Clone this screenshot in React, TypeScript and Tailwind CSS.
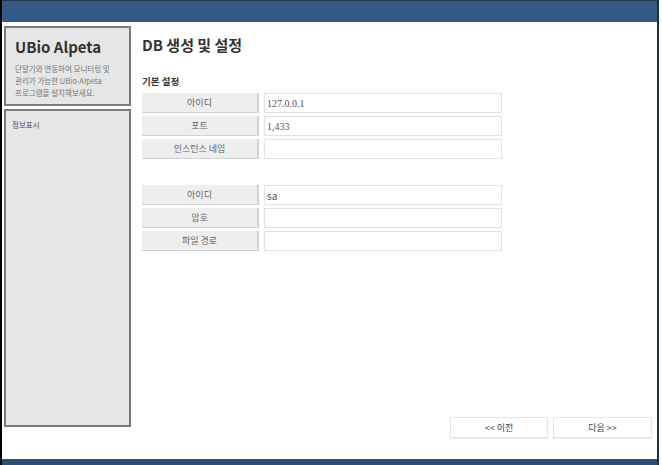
const fontStack = '"Noto Sans CJK KR", "Noto Sans", sans-serif';

interface Field {
  label: string;
  value: string;
  serif?: boolean;
}

const basicFields: Field[] = [
  { label: '아이디', value: '127.0.0.1', serif: true },
  { label: '포트', value: '1,433', serif: true },
  { label: '인스턴스 네임', value: '' },
];

const accountFields: Field[] = [
  { label: '아이디', value: 'sa' },
  { label: '암호', value: '' },
  { label: '파일 경로', value: '' },
];

function FieldRow({ field }: { field: Field }) {
  return (
    <div className="flex h-[20px] gap-[5px]">
      <div className="flex w-[117px] items-center justify-center border-r-2 border-b border-[#d2d2d2] bg-[#eeeeee] text-[9px] text-[#666]">
        {field.label}
      </div>
      <div
        className="flex w-[238px] items-center border border-[#e2e2e2] bg-white px-[2px] text-[10px] text-[#555]"
        style={field.serif ? { fontFamily: '"Liberation Serif", serif' } : undefined}
      >
        {field.value}
      </div>
    </div>
  );
}

export default function App() {
  return (
    <div
      className="flex h-[465px] w-[659px] flex-col border-r-2 border-l-2 border-[#1f2f44] border-l-black bg-white"
      style={{ fontFamily: fontStack }}
    >
      <div className="h-[22px] border-t border-[#22364f] bg-[#345a86]" />

      <div className="flex flex-1 gap-[11px] pt-[4px] pl-[2px]">
        {/* sidebar */}
        <div className="flex w-[127px] flex-col gap-[3px]">
          <div className="h-[80px] border-2 border-[#7b7b7b] bg-[#e6e6e6] px-[9px] pt-[9px]">
            <div className="text-[15px] font-semibold leading-[20px] text-[#333]">UBio Alpeta</div>
            <p className="mt-[6px] text-[7.5px] leading-[12px] text-[#777]">
              단말기와 연동하여 모니터링 및
              <br />
              관리가 가능한 UBio-Alpeta
              <br />
              프로그램을 설치해보세요.
            </p>
          </div>
          <div className="h-[318px] border-2 border-[#7b7b7b] bg-[#e6e6e6] px-[6px] pt-[8px] text-[7.5px] text-[#555]">
            정보표시
          </div>
        </div>

        {/* main */}
        <div className="flex flex-1 flex-col">
          <h1 className="mt-[8px] text-[15px] font-semibold leading-[22px] text-[#333]">DB 생성 및 설정</h1>
          <h2 className="mt-[18px] text-[9.5px] font-bold leading-[14px] text-[#333]">기본 설정</h2>
          <div className="mt-[5px] flex flex-col gap-[3px]">
            {basicFields.map((f) => (
              <FieldRow key={f.label} field={f} />
            ))}
          </div>
          <div className="mt-[26px] flex flex-col gap-[3px]">
            {accountFields.map((f) => (
              <FieldRow key={f.label} field={f} />
            ))}
          </div>

          <div className="mt-auto mb-[21px] flex justify-end gap-[5px] pr-[5px]">
            <button className="h-[21px] w-[98px] border border-[#e4e4e4] bg-white text-[9px] text-[#444] shadow-[0_1px_0_#eee]">
              &lt;&lt; 이전
            </button>
            <button className="h-[21px] w-[99px] border border-[#e4e4e4] bg-white text-[9px] text-[#444] shadow-[0_1px_0_#eee]">
              다음 &gt;&gt;
            </button>
          </div>
        </div>
      </div>

      <div className="h-[6px] bg-[#2f4d75]" />
    </div>
  );
}
